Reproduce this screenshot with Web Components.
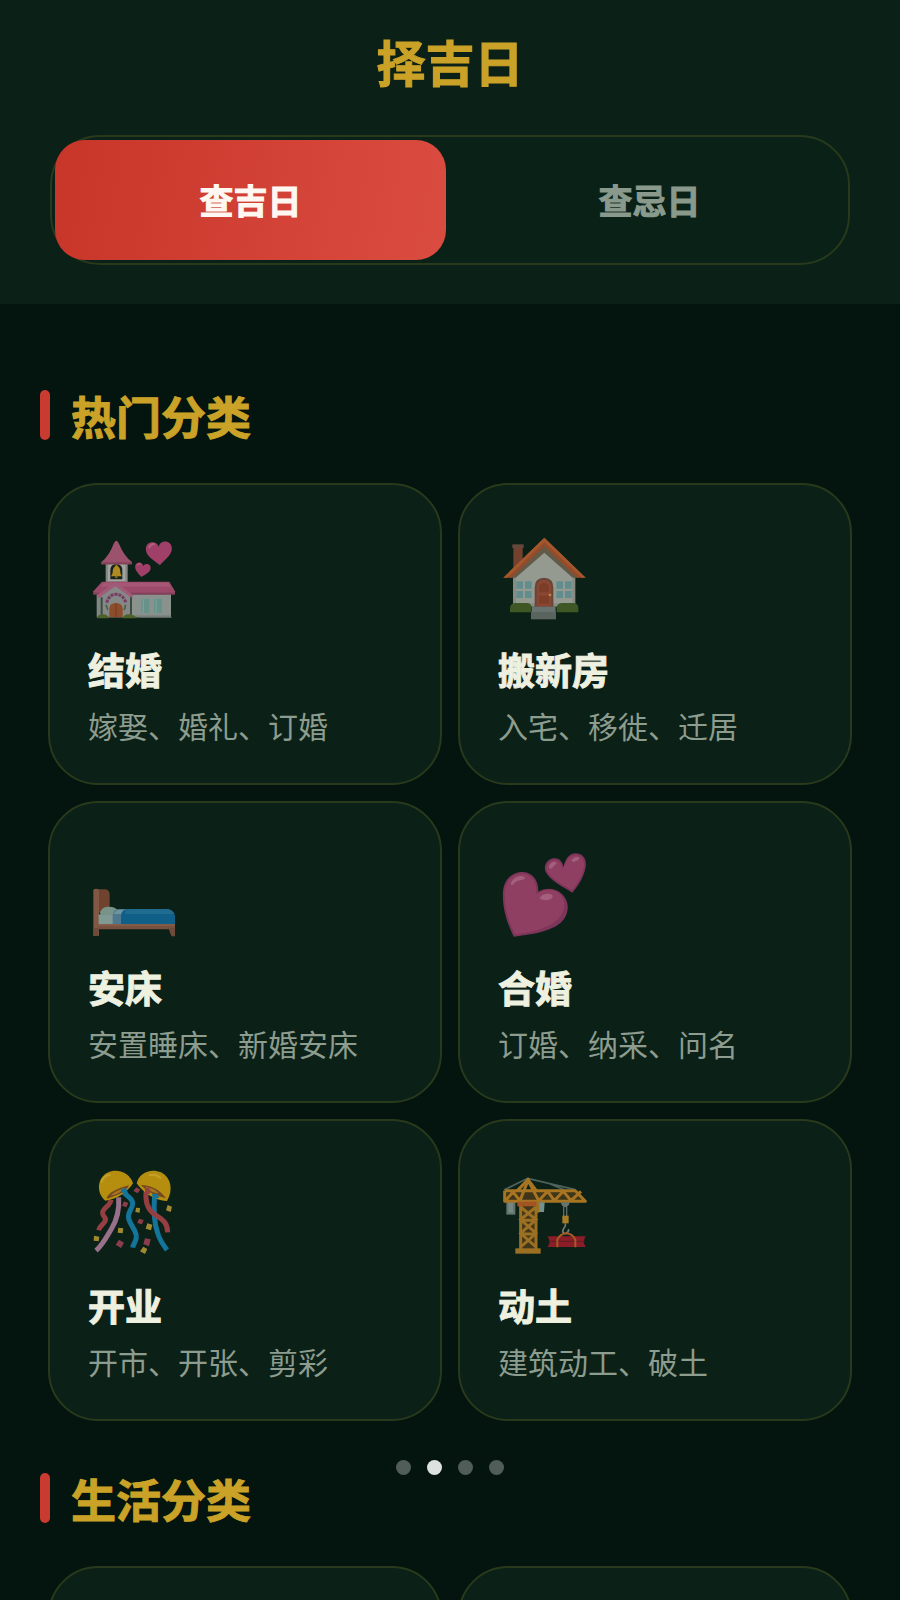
<!DOCTYPE html>
<html lang="zh-CN">
<head>
<meta charset="utf-8">
<meta name="viewport" content="width=device-width, initial-scale=1">
<title>择吉日</title>
<style>
  html, body { margin: 0; height: 100%; }
  body {
    --bg: #04140f;
    --surface: #0b2017;
    --line: #283a1b;
    --gold: #c9a227;
    --red: #c93a30;
    --text: #eef0e0;
    --muted: #8c9c8e;
    background: var(--bg);
    color: var(--text);
    font-family: "Noto Sans CJK SC", "Noto Sans", sans-serif;
  }
</style>
</head>
<body>
<lucky-app>
  <lucky-header slot="header">
    择吉日
    <lucky-tab slot="tabs" active>查吉日</lucky-tab>
    <lucky-tab slot="tabs">查忌日</lucky-tab>
  </lucky-header>

  <category-section>
    <span slot="title">热门分类</span>
    <category-card icon="wedding"><span slot="name">结婚</span>嫁娶、婚礼、订婚</category-card>
    <category-card icon="house"><span slot="name">搬新房</span>入宅、移徙、迁居</category-card>
    <category-card icon="bed"><span slot="name">安床</span>安置睡床、新婚安床</category-card>
    <category-card icon="hearts"><span slot="name">合婚</span>订婚、纳采、问名</category-card>
    <category-card icon="confetti"><span slot="name">开业</span>开市、开张、剪彩</category-card>
    <category-card icon="crane"><span slot="name">动土</span>建筑动工、破土</category-card>
  </category-section>

  <category-section>
    <span slot="title">生活分类</span>
    <category-card></category-card>
    <category-card></category-card>
  </category-section>

  <page-dots slot="overlay" count="4" current="2"></page-dots>
</lucky-app>

<script>
const HEART = 'M0 -20 C-8 -52 -62 -50 -60 -8 C-58 26 -20 44 0 66 C20 44 58 26 60 -8 C62 -50 8 -52 0 -20Z';

/* Icon art: three drawing units per CSS pixel, 288 units square. */
const ICONS = {
  wedding: ['24 3 288 288', `
    <path d="M77 96h66v62H77z" fill="#858a86"/>
    <path d="M84 101h52v52H84z" fill="#a3a39f"/>
    <path d="M91 148v-26q0-20 18-20t18 20v26z" fill="#14251c"/>
    <path d="M109 104q4 0 4 5 8 4 8 18 0 7 5 12H93q5-5 5-12 0-14 8-18 0-5 3-5z" fill="#b08a20"/>
    <circle cx="109" cy="141" r="4" fill="#8a6a18"/>
    <path d="M109 32q4 0 8 9 14 36 39 55v7H64v-7q24-19 37-55 4-9 8-9z" fill="#9c526c"/>
    <path d="M64 97h92v6H64z" fill="#7f4459"/>
    <path d="M50 184h223v78H50z" fill="#7f8783"/>
    <path d="M154 194h119v60H154z" fill="#8a928e"/>
    <path d="M66 155h202l17 29v8H40v-8z" fill="#9b4a69"/>
    <path d="M72 158h192l8 12H62z" fill="#a65776"/>
    <path d="M40 188h245v6H40z" fill="#7f4058"/>
    <path d="M64 262v-68l42-34 46 34v68z" fill="#868787"/>
    <path d="M50 196l56-40 54 40-5 8-49-35-50 35z" fill="#a05b78"/>
    <path d="M80 218q7-25 28-25t30 25" fill="none" stroke="#773b64" stroke-width="9" stroke-dasharray="9 3"/>
    <path d="M78 224q3 12 6 15m52-15q0 12-5 15" fill="none" stroke="#466340" stroke-width="5"/>
    <path d="M65 202v52m88-52v52" stroke="#3c4b42" stroke-width="6"/>
    <path d="M88 262v-25q0-18 20-18t20 18v25z" fill="#8d4c2a"/>
    <path d="M108 220v42" stroke="#603421" stroke-width="2"/>
    <path d="M184 206h24v43h-24zm38 0h24v43h-24z" fill="#66928a"/>
    <path d="M190 206v43m38-43v43" stroke="#7a9f97" stroke-width="4"/>
    <path d="M50 265q4-12 18-12t20 12zm78 0q4-12 18-12t27 12z" fill="#4b6228"/>
    <path d="M173 260h102v4H173z" fill="#5b655f"/>
    <g transform="translate(237 63) rotate(-4) scale(.65)"><path d="${HEART}" fill="#a03f68"/><path d="M-43-20q6-14 22-14" stroke="#b4607f" stroke-width="9" fill="none" stroke-linecap="round"/></g>
    <g transform="translate(188 116) rotate(10) scale(.39)"><path d="${HEART}" fill="#a03f68"/><path d="M-43-20q6-14 22-14" stroke="#b4607f" stroke-width="9" fill="none" stroke-linecap="round"/></g>`],

  house: ['24 18 288 288', `
    <path d="M70 64h28v72H70z" fill="#73412e"/>
    <path d="M67 58h34v11H67z" fill="#65483d"/>
    <path d="M69 150l94-85 93 85v95H69z" fill="#858c84"/>
    <path d="M78 156l85-74 84 74v79H78z" fill="#959a91"/>
    <path d="M163 54L58 158h19l86-75 85 75h20z" fill="#615a49"/>
    <path d="M163 38L40 158h25l98-94 98 94h26z" fill="#934b29"/>
    <path d="M163 38L40 158h12L163 51l112 107h12z" fill="#a4572d"/>
    <g fill="#628d8e"><path d="M79 169h20v22H79zm26 0h20v22h-20zm-26 29h20v21H79zm26 0h20v21h-20z"/><path d="M199 169h20v22h-20zm26 0h20v22h-20zm-26 29h20v21h-20zm26 0h20v21h-20z"/></g>
    <path d="M60 262v-14q2-14 17-14h34q13 0 14 14v14zm140 0v-14q2-14 17-14h32q15 0 16 14v14z" fill="#3e5724"/>
    <path d="M134 246v-58q0-30 28-30t28 30v58z" fill="#67463a"/>
    <path d="M140 244v-54q0-25 22-25t22 25v54z" fill="#8a4630"/>
    <path d="M147 202v-12q0-17 15-17t15 17v12zm0 10h30v24h-30z" fill="#7c3e29"/>
    <circle cx="180" cy="210" r="4" fill="#b68a51"/>
    <path d="M126 245h71v17h-71z" fill="#68726e"/><path d="M123 261h75v22h-75z" fill="#59645f"/>`],

  bed: ['24 -63 288 288', `
    <path d="M52 58h24q12 2 13 14v56H52z" fill="#6f432d"/>
    <path d="M40 61q0-5 8-5t9 5v136H40z" fill="#805844"/>
    <path d="M56 133h50v31H56z" fill="#7f9a94"/>
    <path d="M60 130q4-20 24-20 22-1 30 12l-5 13H63z" fill="#789489"/>
    <path d="M98 164v-29q2-18 19-18h31v47z" fill="#4d7890"/>
    <path d="M110 120h40l-12 12h-38z" fill="#6b959b"/>
    <path d="M123 164v-27q2-20 21-20h114q22 0 27 20v27z" fill="#105f88"/>
    <path d="M137 120q8-3 14-3h106q20 0 26 15H135z" fill="#206c90"/>
    <path d="M56 163h229v15H56z" fill="#785140"/>
    <path d="M56 163h229v4H56z" fill="#8b604a"/>
    <path d="M40 174h17q0 18-5 23H40zm226 0h19v25h-10q-6-10-9-25z" fill="#6f4b3b"/>`],

  hearts: ['24 27 288 288', `
    <path d="M71 290C52 249 36 207 39 154 42 117 69 94 100 96c27 2 46 24 45 59 19-11 48-14 71 7 22 21 22 51 6 75-24 34-84 45-151 53z" fill="#7e355a"/>
    <path d="M75 283C56 243 42 205 44 155c3-34 27-55 55-54 25 2 43 23 40 61 25-15 51-17 71 1 17 17 17 41 4 61-22 36-77 51-139 59z" fill="#8f3f61"/>
    <path d="M62 132q6-20 28-24 17-1 14 9-8 4-20 5-9 3-14 11-4 6-8-1zm87 42q7-14 29-13 15 3 8 14-9 8-25 5-11-1-12-6z" fill="#a35f7d"/>
    <path d="M247 158c-30-19-66-36-80-62-8-19 4-37 22-41 17-3 28 7 32 27 4-25 17-43 38-42 22 1 32 20 28 42-6 29-20 53-40 76z" fill="#7e355a"/>
    <path d="M246 151c-28-17-61-34-74-57-6-15 4-31 18-34 16-2 25 11 28 29 10-29 22-43 40-43 18 2 27 18 24 35-6 27-18 48-36 70z" fill="#8f3f61"/>
    <path d="M176 82q3-15 17-17 10 0 4 9-6 1-9 9-6 6-12-1zm68-20q9-14 23-10 2 8-9 11-8 5-14-1z" fill="#a35f7d"/>`],

  confetti: ['24 21 288 288', `
    <g fill="none" stroke-linecap="butt" stroke-width="15">
      <path d="M93 119c-2 20-27 25-25 41 2 13 13 12 7 24-4 9-16 12-19 27" stroke="#963f43"/>
      <path d="M116 112c2 28-3 64-22 95-13 22-26 48-46 65" stroke="#98708a"/>
      <path d="M128 91c8 19 31 20 30 41-1 18-17 25-12 44 5 22 22 32 23 54 1 13-9 20-11 33" stroke="#14759b"/>
      <path d="M224 104c-4 49-3 83 9 115 5 20 16 35 28 51" stroke="#14759b"/>
      <path d="M199 89c-4 31 3 58 22 72 18 14 41 19 42 56" stroke="#963f43"/>
    </g>
    <path d="M76 122C48 99 51 54 82 38c34-15 68 3 77 32-14 23-47 49-83 52z" fill="#b58e10"/>
    <path d="M80 113q11-23 67-37-9 18-28 26l-36 14z" fill="#754821"/>
    <path d="M92 107q11-13 41-24-9 13-25 20z" fill="#a57622"/>
    <path d="M170 70C176 40 211 23 243 37c31 16 37 54 18 86-31 1-72-24-91-53z" fill="#b58e10"/>
    <path d="M182 75q48 1 76 40-43-8-76-40z" fill="#754821"/>
    <path d="M195 80q28 4 41 20-24-3-41-20z" fill="#a57622"/>
    <path d="M122 88l16-4 6 15-14 4zm93 14l18-1 4 13-17 2z" fill="#14759b"/>
    <path d="M194 84h14l3 16-14 6z" fill="#963f43"/>
    <path d="M65 65q5-18 24-20m120 1q18-6 32 7" fill="none" stroke="#c4a22a" stroke-width="6" stroke-linecap="round"/>
    <g fill="#a08a30"><path d="M115 203l15 2-2 15-15-2zm53-60l12 1-1 14-13-2zm95-8l13 5-4 16-14-5zM42 227l16 3-2 14-15-2zm148 33l12 7-7 15-15-8zM202 190l15 4-4 17-16-5z"/></g>
    <g fill="#8c3d4c"><path d="M132 124l13 5-6 13-13-5zm45 52l14 4-5 13-14-4zm-8-94l12 7-8 11-13-7zm-52 157l15 9-9 16-16-10zm78-4l17 3-5 21-17-7z"/></g>`],

  crane: ['24 21 288 288', `
    <path d="M42 90L113 55l143 34M224 90l-45-19" fill="none" stroke="#4e635d" stroke-width="5"/>
    <path d="M49 124h27v40H49z" fill="#60756f"/><path d="M55 129h14v29H55z" fill="#768781"/>
    <path d="M88 129h51v139H88z" fill="#423719"/>
    <path d="M92 123v146m46-146v146M92 141l46 38-46 41 46 41M138 141l-46 38 46 41-46 41M92 181h46m-46 41h46" fill="none" stroke="#9c7022" stroke-width="9"/>
    <path d="M46 94h216l18 29H46z" fill="#3f3519"/>
    <path d="M45 92h211l30 32H44V92m2 30l23-26 21 26 24-61 32 61 27-28 20 28 27-28 23 28 30-28" fill="none" stroke="#a77522" stroke-width="9" stroke-linejoin="round"/>
    <path d="M82 92l32-33 25 33" fill="none" stroke="#a77522" stroke-width="9"/>
    <path d="M82 125h61v14H82z" fill="#a35423"/><path d="M141 127h23l-2 29h-21z" fill="#74918b"/><path d="M139 127h9v31h-9z" fill="#9c7022"/>
    <path d="M76 265h76v16H76z" fill="#9c7022"/>
    <path d="M213 127h26q-2 14-13 15-12-1-13-15z" fill="#657570"/>
    <path d="M221 141v27m9-27v27" stroke="#5f6e69" stroke-width="4"/>
    <path d="M217 167h19v23h-19z" fill="#a97c28"/>
    <path d="M226 190v8q-8 10-8 17 3 8 12 4 8-5 5-12" fill="none" stroke="#717a76" stroke-width="5"/>
    <path d="M173 229h114l-7 16 7 16H173l7-16z" fill="#8a1d28"/>
    <path d="M176 244h108" stroke="#601f20" stroke-width="3"/>
    <path d="M202 262v-23q8-17 27-19 19 2 27 19v23" fill="none" stroke="#a65a25" stroke-width="6"/>`]
};

const define = (name, template, setup) => {
  customElements.define(name, class extends HTMLElement {
    connectedCallback() {
      if (this.shadowRoot) return;
      this.attachShadow({ mode: 'open' }).innerHTML = template;
      if (setup) setup(this, this.shadowRoot);
    }
  });
};

define('lucky-app', `
  <style>
    :host { display: flex; flex-direction: column; height: 100vh; overflow: hidden; }
    main { flex: 1; min-height: 0; overflow: hidden; padding: 86px 48px 0 40px;
           display: flex; flex-direction: column; gap: 52px; }
  </style>
  <slot name="header"></slot>
  <main><slot></slot></main>
  <slot name="overlay"></slot>`);

define('lucky-header', `
  <style>
    :host { display: block; background: var(--surface); padding: 33px 50px 39px; }
    h1 { margin: 0 0 46px; font-size: 49px; line-height: 56px; font-weight: 700; color: var(--gold);
         text-align: center; -webkit-text-stroke: 1px currentColor; }
    .tabs { display: grid; grid-template-columns: 1fr 1fr; gap: 8px; padding: 3px;
            border: 2px solid var(--line); border-radius: 50px; background: #0a2117; }
  </style>
  <h1><slot></slot></h1>
  <div class="tabs" role="tablist"><slot name="tabs"></slot></div>`);

define('lucky-tab', `
  <style>
    :host { display: grid; }
    button { border: 0; border-radius: 30px; padding: 35px 0; background: none; color: #899a8c;
             font: inherit; font-size: 34px; line-height: 50px; font-weight: 700; cursor: pointer;
             -webkit-text-stroke: 1px currentColor; }
    :host([active]) button { color: #fff8f2; background: linear-gradient(100deg, #c83529, #db4c40); }
  </style>
  <button type="button" role="tab"><slot></slot></button>`,
  (host, root) => root.querySelector('button').setAttribute('aria-selected', host.hasAttribute('active')));

define('category-section', `
  <style>
    :host { display: block; }
    h2 { margin: 0 0 41px; display: flex; gap: 21px; color: var(--gold);
         font-size: 45px; line-height: 52px; font-weight: 700; -webkit-text-stroke: 1px currentColor; }
    h2::before { content: ""; width: 10px; height: 50px; border-radius: 5px; background: var(--red); }
    .grid { display: grid; grid-template-columns: 1fr 1fr; gap: 16px; margin-left: 8px; }
  </style>
  <h2><slot name="title"></slot></h2>
  <div class="grid"><slot></slot></div>`);

define('category-card', `
  <style>
    :host { display: grid; }
    a { box-sizing: border-box; min-height: 302px; padding: 46px 38px 40px; border: 2px solid var(--line);
        border-radius: 50px; background: var(--surface); color: inherit; text-decoration: none; }
    svg { display: block; width: 96px; height: 96px; }
    h3 { margin: 20px 0 16px; font-size: 37px; line-height: 44px; font-weight: 700; -webkit-text-stroke: 1px currentColor; }
    p { margin: 0; font-size: 30px; line-height: 36px; color: var(--muted); }
  </style>
  <a href="#"><svg aria-hidden="true"></svg><h3><slot name="name"></slot></h3><p><slot></slot></p></a>`,
  (host, root) => {
    const art = ICONS[host.getAttribute('icon')];
    if (!art) return;
    const svg = root.querySelector('svg');
    svg.setAttribute('viewBox', art[0]);
    svg.innerHTML = art[1];
  });

define('page-dots', `
  <style>
    :host { position: fixed; left: 0; right: 0; bottom: 125px; display: flex; justify-content: center; gap: 16px; }
    button { width: 15px; height: 15px; padding: 0; border: 0; border-radius: 50%; background: #505d58; }
    button[aria-current] { background: #dde1df; }
  </style>`,
  (host, root) => {
    for (let i = 1; i <= +host.getAttribute('count'); i++) {
      const dot = document.createElement('button');
      dot.type = 'button';
      dot.setAttribute('aria-label', '第' + i + '页');
      if (i === +host.getAttribute('current')) dot.setAttribute('aria-current', 'true');
      root.append(dot);
    }
  });
</script>
</body>
</html>
